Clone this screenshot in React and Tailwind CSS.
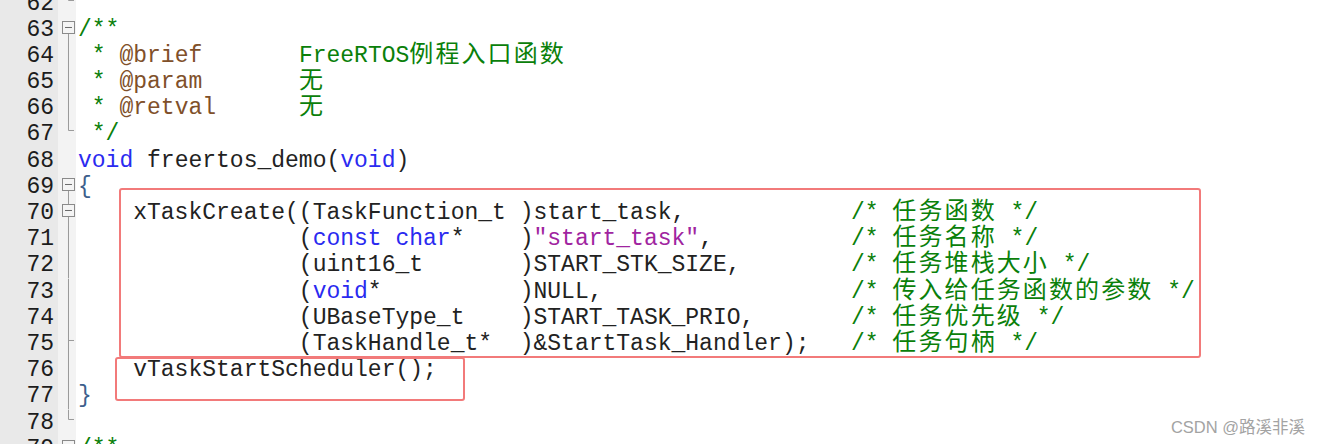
import React from "react";

const D = "text-[#222222]";
const G = "text-[#0a800a]";
const B = "text-[#2a2af0]";
const P = "text-[#a024a0]";
const K = "text-[#80502a]";
const BR = "text-[#3d5f8c]";
const CJK = "text-[24px] tracking-[2.1px]";

const sp = (n) => " ".repeat(n);

const lines = [
  { n: 62, f: { top: true, tick: true }, c: [] },
  { n: 63, f: { box: true, bottom: true }, c: [["/**", G]] },
  { n: 64, f: { top: true, bottom: true }, c: [[" * ", G], ["@brief", K], [sp(7), G], ["FreeRTOS", G], ["例程入口函数", G, true]] },
  { n: 65, f: { top: true, bottom: true }, c: [[" * ", G], ["@param", K], [sp(7), G], ["无", G, true]] },
  { n: 66, f: { top: true, bottom: true }, c: [[" * ", G], ["@retval", K], [sp(6), G], ["无", G, true]] },
  { n: 67, f: { top: true, tick: true }, c: [[" */", G]] },
  { n: 68, f: {}, c: [["void", B], [" freertos_demo(", D], ["void", B], [")", D]] },
  { n: 69, f: { box: true, bottom: true }, c: [["{", BR]] },
  {
    n: 70,
    f: { top: true, box: true, bottom: true },
    c: [[sp(4) + "xTaskCreate((TaskFunction_t )start_task," + sp(12), D], ["/* ", G], ["任务函数", G, true], [" */", G]],
  },
  {
    n: 71,
    f: { top: true, bottom: true },
    c: [[sp(16) + "(", D], ["const char", B], ["*    )", D], ['"start_task"', P], ["," + sp(10), D], ["/* ", G], ["任务名称", G, true], [" */", G]],
  },
  {
    n: 72,
    f: { top: true, bottom: true },
    c: [[sp(16) + "(uint16_t" + sp(7) + ")START_STK_SIZE," + sp(8), D], ["/* ", G], ["任务堆栈大小", G, true], [" */", G]],
  },
  {
    n: 73,
    f: { top: true, bottom: true },
    c: [[sp(16) + "(", D], ["void", B], ["*" + sp(10) + ")NULL," + sp(18), D], ["/* ", G], ["传入给任务函数的参数", G, true], [" */", G]],
  },
  {
    n: 74,
    f: { top: true, bottom: true },
    c: [[sp(16) + "(UBaseType_t" + sp(4) + ")START_TASK_PRIO," + sp(7), D], ["/* ", G], ["任务优先级", G, true], [" */", G]],
  },
  {
    n: 75,
    f: { top: true, bottom: true, tick: true },
    c: [[sp(16) + "(TaskHandle_t*" + sp(2) + ")&StartTask_Handler);" + sp(3), D], ["/* ", G], ["任务句柄", G, true], [" */", G]],
  },
  { n: 76, f: { top: true, bottom: true }, c: [[sp(4) + "vTaskStartScheduler();", D]] },
  { n: 77, f: { top: true, bottom: true }, c: [["}", BR]] },
  { n: 78, f: { top: true, tick: true }, c: [] },
  { n: 79, f: { box: true, bottom: true }, c: [["/**", G]] },
];

function Fold({ f }) {
  const boxTop = 4;
  const boxBot = 16;
  const mid = 9.5;
  return (
    <svg width="18" height="26.2" viewBox="0 0 18 26.2" className="block">
      {f.top && (
        <line x1="10.5" y1="0" x2="10.5" y2={f.box ? boxTop : f.bottom ? 26.2 : mid} stroke="#9a9a9a" strokeWidth="1" />
      )}
      {f.bottom && (
        <line x1="10.5" y1={f.box ? boxBot : f.top ? 0 : mid} x2="10.5" y2="26.2" stroke="#9a9a9a" strokeWidth="1" />
      )}
      {f.tick && <line x1="10.5" y1={mid} x2="16" y2={mid} stroke="#9a9a9a" strokeWidth="1" />}
      {f.box && (
        <g>
          <rect x="4.5" y={boxTop + 0.5} width="12" height="12" fill="#f4f4f4" stroke="#8a8a8a" strokeWidth="1" />
          <line x1="7" y1={boxTop + 6.5} x2="14" y2={boxTop + 6.5} stroke="#6a6a6a" strokeWidth="1" />
        </g>
      )}
    </svg>
  );
}

export default function App() {
  return (
    <div className="relative w-[1319px] h-[444px] overflow-hidden bg-white font-['Liberation_Mono','Noto_Sans_CJK_SC',monospace] text-[23px] leading-[26.2px]">
      <div className="mt-[-9.5px] flex flex-col">
        {lines.map((l) => (
          <div key={l.n} className="flex h-[26.2px]">
            <div className="w-[58px] shrink-0 bg-[#e9e9e9] pr-[4px] text-right text-[#1c1c1c]">{l.n}</div>
            <div className="w-[18px] shrink-0 bg-[#f3f3f3]">
              <Fold f={l.f} />
            </div>
            <div className="whitespace-pre pl-[2px]">
              {l.c.map((t, i) => (
                <span key={i} className={t[2] ? `${t[1]} ${CJK}` : t[1]}>
                  {t[0]}
                </span>
              ))}
            </div>
          </div>
        ))}
      </div>

      <div className="absolute left-[119px] top-[188px] w-[1082px] h-[170px] rounded-[3px] border-2 border-[#f27a7a]" />
      <div className="absolute left-[115px] top-[357px] w-[350px] h-[44px] rounded-[3px] border-2 border-[#f27a7a]" />

      <div className="absolute right-[14px] bottom-[7px] font-['Liberation_Sans','Noto_Sans_CJK_SC',sans-serif] text-[16.5px] leading-[20px] text-[#a3a3a3]">
        CSDN @路溪非溪
      </div>
    </div>
  );
}
